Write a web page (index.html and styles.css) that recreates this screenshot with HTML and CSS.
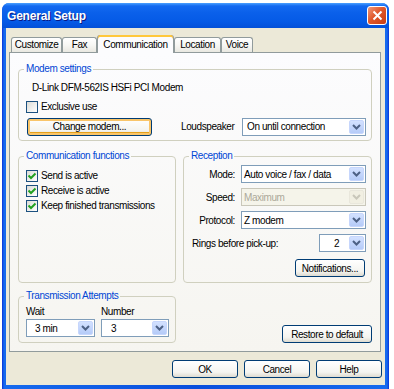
FILE: index.html
```html
<!DOCTYPE html>
<html lang="en">
<head>
    <meta charset="UTF-8">
    <title>General Setup</title>
    <link rel="stylesheet" href="styles.css">
</head>
<body>

<div class="window">
    <div class="titlebar">
        <span class="title">General Setup</span>
        <span class="close">
            <svg width="11" height="11" viewBox="0 0 11 11"><path d="M1.5 1.5 L9.5 9.5 M9.5 1.5 L1.5 9.5" stroke="#fff" stroke-width="2" /></svg>
        </span>
    </div>

    <div class="body">
        <div class="tabs">
            <div class="tab tab-customize">Customize</div>
            <div class="tab tab-fax">Fax</div>
            <div class="tab tab-comm active">Communication</div>
            <div class="tab tab-location">Location</div>
            <div class="tab tab-voice">Voice</div>
        </div>

        <div class="panel">
            <fieldset class="group modem">
                <legend>Modem settings</legend>
                <div class="modem-name">D-Link DFM-562IS HSFi PCI Modem</div>
                <div class="check"><span class="box"></span>Exclusive use</div>
                <div class="modem-row">
                    <div class="btn focus change">Change modem...</div>
                    <span class="speaker-label">Loudspeaker</span>
                    <div class="select speaker">
                        <span class="value">On until connection</span>
                        <span class="drop"><svg width="9" height="6" viewBox="0 0 9 6"><path d="M1 1 L4.5 4.5 L8 1" fill="none" stroke="#4d6185" stroke-width="2" /></svg></span>
                    </div>
                </div>
            </fieldset>

            <div class="middle">
                <fieldset class="group functions">
                    <legend>Communication functions</legend>
                    <div class="check"><span class="box on"><svg width="12" height="12" viewBox="0 0 12 12"><path d="M2.5 5.5 L5 8 L9.5 3.5" fill="none" stroke="#21a121" stroke-width="2" /></svg></span>Send is active</div>
                    <div class="check"><span class="box on"><svg width="12" height="12" viewBox="0 0 12 12"><path d="M2.5 5.5 L5 8 L9.5 3.5" fill="none" stroke="#21a121" stroke-width="2" /></svg></span>Receive is active</div>
                    <div class="check"><span class="box on"><svg width="12" height="12" viewBox="0 0 12 12"><path d="M2.5 5.5 L5 8 L9.5 3.5" fill="none" stroke="#21a121" stroke-width="2" /></svg></span>Keep finished transmissions</div>
                </fieldset>

                <fieldset class="group reception">
                    <legend>Reception</legend>
                    <div class="field">
                        <span class="field-label">Mode:</span>
                        <div class="select wide">
                            <span class="value">Auto voice / fax / data</span>
                            <span class="drop"><svg width="9" height="6" viewBox="0 0 9 6"><path d="M1 1 L4.5 4.5 L8 1" fill="none" stroke="#4d6185" stroke-width="2" /></svg></span>
                        </div>
                    </div>
                    <div class="field">
                        <span class="field-label">Speed:</span>
                        <div class="select wide disabled">
                            <span class="value">Maximum</span>
                            <span class="drop"><svg width="9" height="6" viewBox="0 0 9 6"><path d="M1 1 L4.5 4.5 L8 1" fill="none" stroke="#c9c7ba" stroke-width="2" /></svg></span>
                        </div>
                    </div>
                    <div class="field">
                        <span class="field-label">Protocol:</span>
                        <div class="select wide">
                            <span class="value">Z modem</span>
                            <span class="drop"><svg width="9" height="6" viewBox="0 0 9 6"><path d="M1 1 L4.5 4.5 L8 1" fill="none" stroke="#4d6185" stroke-width="2" /></svg></span>
                        </div>
                    </div>
                    <div class="field rings">
                        <span>Rings before pick-up:</span>
                        <div class="select small">
                            <span class="value">2</span>
                            <span class="drop"><svg width="9" height="6" viewBox="0 0 9 6"><path d="M1 1 L4.5 4.5 L8 1" fill="none" stroke="#4d6185" stroke-width="2" /></svg></span>
                        </div>
                    </div>
                    <div class="btn notify">Notifications...</div>
                </fieldset>
            </div>

            <div class="bottom">
                <fieldset class="group attempts">
                    <legend>Transmission Attempts</legend>
                    <div class="attempt-cols">
                        <div class="attempt">
                            <span>Wait</span>
                            <div class="select">
                                <span class="value wait">3 min</span>
                                <span class="drop"><svg width="9" height="6" viewBox="0 0 9 6"><path d="M1 1 L4.5 4.5 L8 1" fill="none" stroke="#4d6185" stroke-width="2" /></svg></span>
                            </div>
                        </div>
                        <div class="attempt">
                            <span>Number</span>
                            <div class="select">
                                <span class="value number">3</span>
                                <span class="drop"><svg width="9" height="6" viewBox="0 0 9 6"><path d="M1 1 L4.5 4.5 L8 1" fill="none" stroke="#4d6185" stroke-width="2" /></svg></span>
                            </div>
                        </div>
                    </div>
                </fieldset>
                <div class="btn restore">Restore to default</div>
            </div>
        </div>

        <div class="actions">
            <div class="btn action">OK</div>
            <div class="btn action">Cancel</div>
            <div class="btn action">Help</div>
        </div>
    </div>
</div>

</body>
</html>
```

FILE: styles.css
```css
* {
    box-sizing: border-box;
}
body {
    margin: 0;
    background: #fff;
    font-family: "Liberation Sans", Arial, sans-serif;
    font-size: 10px;
    letter-spacing: -0.4px;
    color: #000;
    white-space: nowrap;
}
.window {
    width: 387px;
    height: 386px;
    margin: 3px 0 0 2px;
    display: flex;
    flex-direction: column;
    background: linear-gradient(90deg, #0831d9, #166aee 2px, #0a4fdc 50%, #166aee calc(100% - 2px), #0831d9);
    border-radius: 7px 7px 0 0;
    overflow: hidden;
}
.titlebar {
    height: 25px;
    flex: none;
    display: flex;
    align-items: center;
    justify-content: space-between;
    padding: 0 2px 0 5px;
    background: linear-gradient(#4aa0ff 0%, #1369f0 12%, #0a60ea 40%, #055ae6 75%, #0350d8 100%);
}
.title {
    color: #fff;
    font-weight: bold;
    font-size: 12px;
    letter-spacing: -0.2px;
    text-shadow: 1px 1px #0a1883;
}
.close {
    width: 20px;
    height: 19px;
    display: flex;
    align-items: center;
    justify-content: center;
    border: 1px solid #fff;
    border-radius: 3px;
    background: linear-gradient(135deg, #f09a7c, #e0582b 45%, #c93d12);
}
.body {
    flex: 1;
    margin: 0 4px 4px;
    background: #ece9d8;
    padding: 7px 4px 0 3px;
    display: flex;
    flex-direction: column;
}

/* tabs */
.tabs {
    display: flex;
    align-items: flex-end;
    height: 17px;
    padding-left: 2px;
}
.tab {
    height: 15px;
    border: 1px solid #919b9c;
    border-bottom: 0;
    border-radius: 3px 3px 0 0;
    background: linear-gradient(#fff, #f7f7f4 50%, #e9e8e1);
    text-align: center;
    line-height: 14px;
}
.tab-customize { width: 51px; }
.tab-fax { width: 35px; }
.tab-comm { width: 77px; }
.tab-location { width: 47px; }
.tab-voice { width: 32px; }
.tab.active {
    height: 18px;
    margin-bottom: -1px;
    position: relative;
    z-index: 1;
    background: #fcfcfe;
    border-top: 0;
    box-shadow: inset 0 2px #ffc83c, inset 0 1px #e68b2c;
    line-height: 19px;
}

/* page */
.panel {
    height: 300px;
    flex: none;
    border: 1px solid #919b9c;
    background: linear-gradient(#fcfcfe, #f6f5f0);
    padding: 10px 8px 0 8px;
}
.group {
    margin: 0;
    border: 1px solid #d0d0bf;
    border-radius: 4px;
    padding: 0 5px 4px 7px;
}
.group legend {
    color: #0046d5;
    line-height: 12px;
    padding: 0 2px;
    margin-left: -2px;
}
.modem-name {
    margin: 6px 0 0 6px;
    line-height: 13px;
}
.check {
    display: flex;
    align-items: center;
    height: 15px;
    gap: 3px;
}
.modem .check {
    margin-top: 5px;
}
.box {
    width: 12px;
    height: 12px;
    border: 1px solid #1c5180;
    background: linear-gradient(135deg, #dcdcd7, #fff);
    display: flex;
    align-items: center;
    justify-content: center;
}
.box svg {
    flex: none;
}
.modem-row {
    display: flex;
    align-items: center;
    height: 19px;
    margin-top: 3px;
}
.speaker-label {
    margin-left: 29px;
}
.speaker {
    margin-left: auto;
    width: 124px;
}

/* controls */
.btn {
    height: 18px;
    border: 1px solid #003c74;
    border-radius: 3px;
    background: linear-gradient(#fff, #f4f4f0 70%, #dedbd0);
    display: flex;
    align-items: center;
    justify-content: center;
}
.btn.focus {
    box-shadow: inset 0 0 0 2px #f9c56a, inset 0 -1px 0 2px #e5a01a;
}
.change {
    width: 125px;
    margin-left: 1px;
}
.select {
    height: 18px;
    display: flex;
    align-items: center;
    border: 1px solid #7f9db9;
    background: #fff;
    padding-left: 4px;
}
.select .value {
    flex: 1;
}
.drop {
    flex: none;
    width: 15px;
    height: 14px;
    margin-right: 1px;
    border: 1px solid #c6d6fc;
    border-radius: 2px;
    background: linear-gradient(#d3e1ff, #b5cbf8);
    display: flex;
    align-items: center;
    justify-content: center;
}
.select.disabled {
    background: #f5f4ea;
    border-color: #c9c7ba;
    color: #aca899;
}
.select.disabled .drop {
    background: #f1efe2;
    border-color: #e9e7dc;
}

/* middle */
.middle {
    display: flex;
    gap: 7px;
    height: 133px;
    margin-top: 9px;
}
.functions {
    width: 158px;
}
.functions .check:first-of-type {
    margin-top: 6px;
}
.reception {
    flex: 1;
    display: flex;
    flex-direction: column;
    gap: 5px;
}
.field {
    display: flex;
    align-items: center;
    gap: 6px;
}
.reception .field:first-of-type {
    margin-top: 3px;
}
.field-label {
    width: 44px;
    text-align: right;
}
.select.wide {
    width: 125px;
    padding-left: 2px;
}
.rings {
    padding-left: 1px;
}
.select.small {
    width: 47px;
    margin-left: auto;
}
.select.small .value {
    text-align: center;
}
.notify {
    width: 70px;
    align-self: flex-end;
    margin: 2px 1px 0 0;
}

/* bottom */
.bottom {
    display: flex;
    align-items: flex-end;
    justify-content: space-between;
    margin-top: 7px;
}
.attempts {
    width: 158px;
    padding-bottom: 5px;
}
.attempt-cols {
    display: flex;
    gap: 6px;
    margin-top: 3px;
}
.attempt {
    display: flex;
    flex-direction: column;
    gap: 1px;
}
.attempt span:first-child {
    line-height: 13px;
}
.attempt:first-child .select {
    width: 69px;
}
.attempt:last-child .select {
    width: 68px;
}
.value.wait {
    padding-left: 4px;
}
.value.number {
    padding-left: 5px;
}
.restore {
    width: 90px;
}

/* dialog buttons */
.actions {
    display: flex;
    justify-content: flex-end;
    gap: 6px;
    margin: 8px -1px 0 0;
}
.action {
    width: 66px;
}
```
